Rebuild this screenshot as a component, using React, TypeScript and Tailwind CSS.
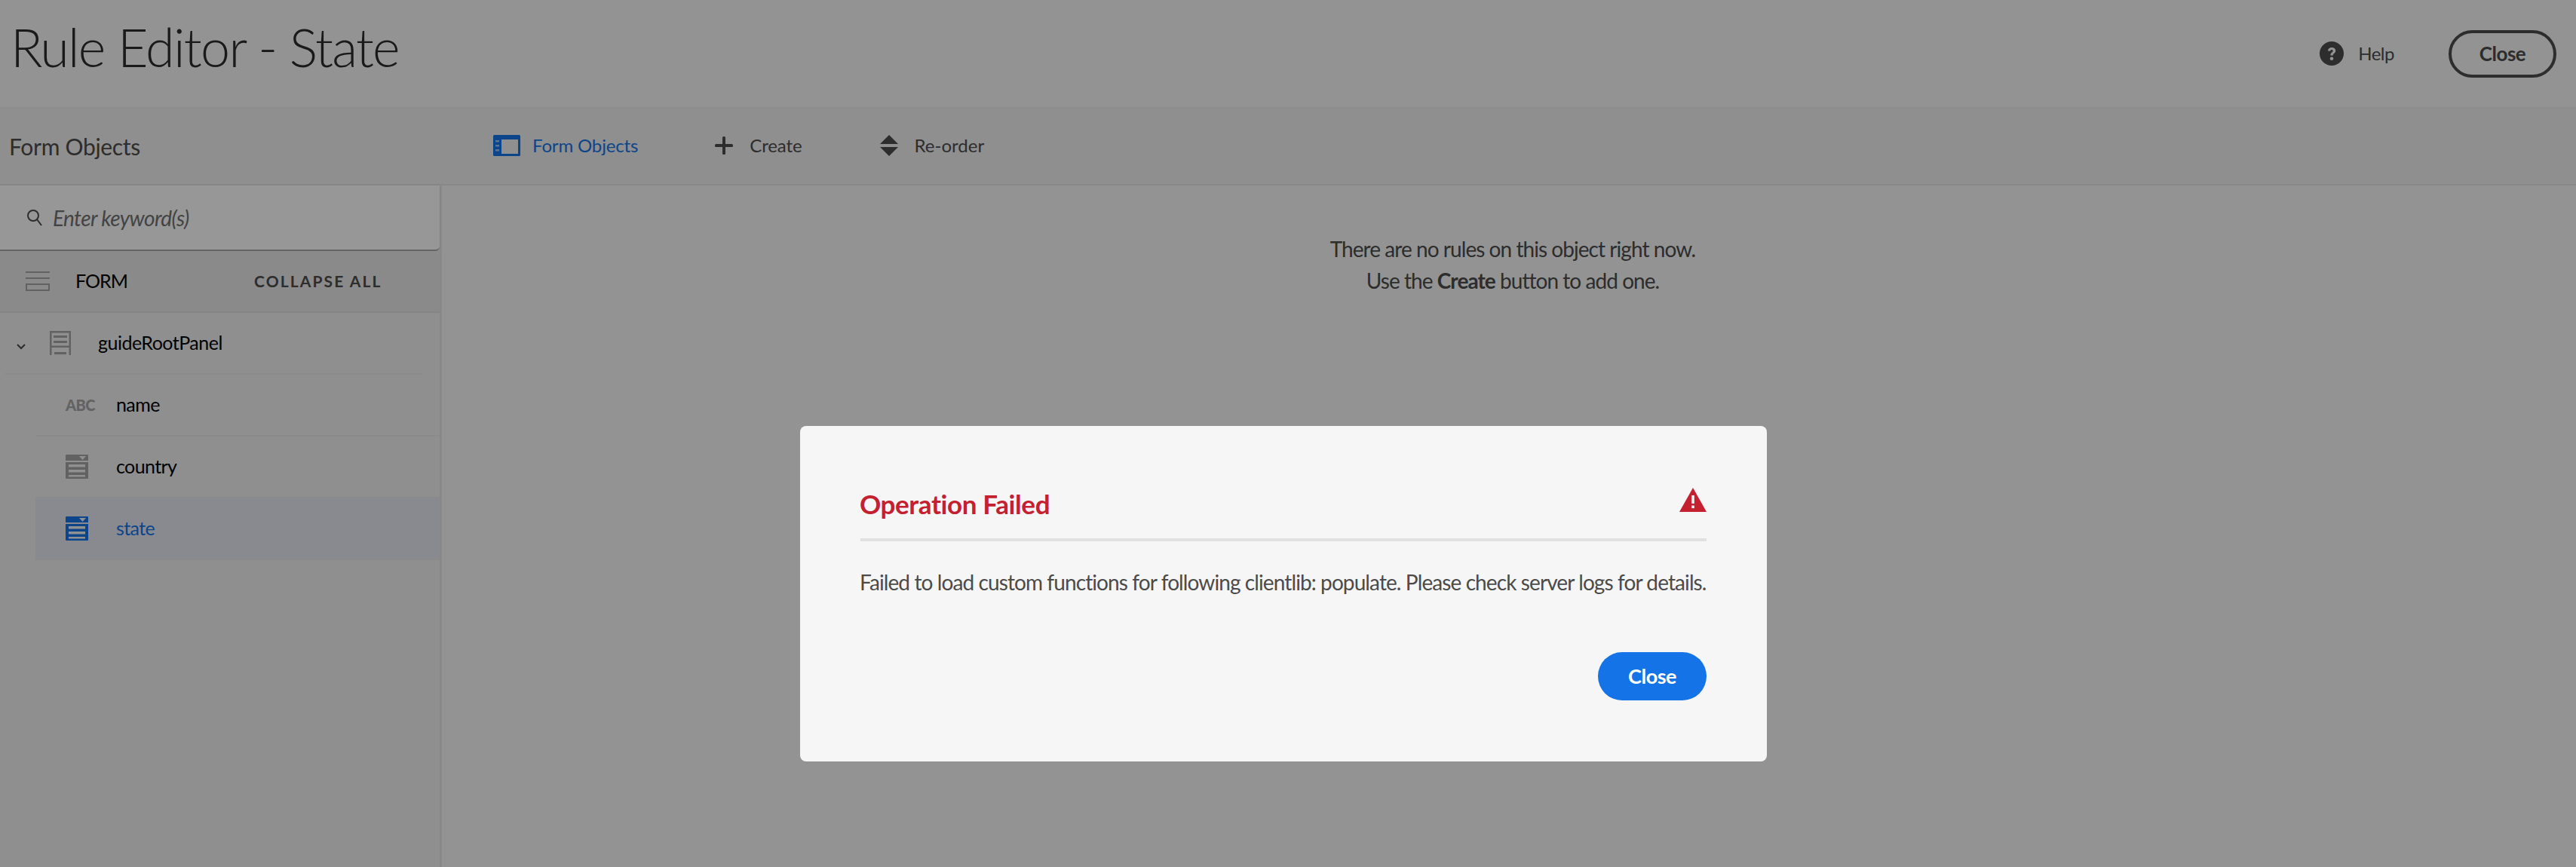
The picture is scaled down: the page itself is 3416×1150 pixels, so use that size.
function FormObjectsIcon() {
  return (
    <svg width="36" height="28" viewBox="0 0 36 28">
      <rect width="36" height="28" rx="1.5" fill="#1473e6" />
      <rect x="11" y="6" width="22" height="19" fill="#f0f0f0" />
      <rect x="3" y="7" width="5" height="2.5" fill="#9cc3f2" />
      <rect x="3" y="13" width="5" height="2.5" fill="#9cc3f2" />
      <rect x="3" y="19" width="5" height="2.5" fill="#9cc3f2" />
    </svg>
  );
}

function ReorderIcon() {
  return (
    <svg width="24" height="28" viewBox="0 0 24 28" fill="#4b4b4b">
      <path d="M12 0 L24 12 L0 12 Z" />
      <path d="M0 16 L24 16 L12 28 Z" />
    </svg>
  );
}

function DropdownIcon({ color }: { color: string }) {
  return (
    <svg width="30" height="32" viewBox="0 0 30 32" fill={color}>
      <path d="M0 1 Q0 0 1 0 H29 Q30 0 30 1 V8 H0 Z" />
      <path d="M18 2 H27 L22.5 7 Z" fill="#f0f0f0" />
      <path d="M0 10 H30 V31 Q30 32 29 32 H1 Q0 32 0 31 Z" />
      <rect x="4" y="13" width="22" height="3.5" fill="#f0f0f0" />
      <rect x="4" y="20" width="22" height="3.5" fill="#f0f0f0" />
      <rect x="4" y="27" width="22" height="2.5" fill="#f0f0f0" />
    </svg>
  );
}

function PanelIcon() {
  return (
    <svg width="28" height="32" viewBox="0 0 28 32" fill="#a4a4a4">
      <path d="M0 0 H28 V22 H0 Z M2.5 2.5 V19.5 H25.5 V2.5 Z" fillRule="evenodd" />
      <rect x="5" y="6" width="18" height="3" />
      <rect x="5" y="13" width="18" height="3" />
      <rect x="0" y="22" width="2.5" height="10" />
      <rect x="25.5" y="22" width="2.5" height="10" />
      <rect x="6" y="28" width="16" height="3" />
    </svg>
  );
}

function FormIcon() {
  return (
    <svg width="32" height="26" viewBox="0 0 32 26" fill="#a4a4a4">
      <rect y="0" width="32" height="2" />
      <rect y="8" width="32" height="2" />
      <path d="M0 16 H32 V26 H0 Z M2 18 V24 H30 V18 Z" fillRule="evenodd" />
    </svg>
  );
}

function TreeRow({
  icon,
  label,
  selected,
}: {
  icon: React.ReactNode;
  label: string;
  selected?: boolean;
}) {
  return (
    <div
      className={`ml-[47px] h-[82px] flex items-center border-b-2 border-[#e6e6e6] ${selected ? 'bg-[#e4e7ee]' : ''}`}
    >
      <div className="w-[107px] pl-[40px] flex items-center">{icon}</div>
      <span className={`text-[25px] tracking-[-0.6px] ${selected ? 'text-[#1473e6]' : 'text-black'}`}>{label}</span>
    </div>
  );
}

export default function App() {
  return (
    <div className="relative w-[3416px] h-[1150px] overflow-hidden bg-[#f5f5f5] font-['Lato','Noto_Sans',sans-serif] text-[#4b4b4b]">
      {/* Header */}
      <header className="h-[144px] flex items-center justify-between border-b-2 border-[#ebebeb] pl-[14px] pr-[26px]">
        <h1 className="mb-[18px] text-[70px] font-light tracking-[-1.7px] text-[#2c2c2c] leading-none">Rule Editor - State</h1>
        <div className="flex items-center">
          <svg width="32" height="32" viewBox="0 0 32 32" className="mr-[19px]">
            <circle cx="16" cy="16" r="16" fill="#4b4b4b" />
            <path d="M11 12.5 C11 9.5 13.2 8 16.2 8 C19.2 8 21.2 9.7 21.2 12.2 C21.2 15.6 17.8 15.6 17.8 18.5 H14.4 C14.4 14.4 17.6 14.4 17.6 12.4 C17.6 11.3 16.9 10.9 16 10.9 C15 10.9 14.3 11.5 14.2 12.8 Z" fill="#f5f5f5" />
            <circle cx="16" cy="22.8" r="2.3" fill="#f5f5f5" />
          </svg>
          <span className="text-[24px] tracking-[-0.5px] mr-[72px]">Help</span>
          <button className="w-[143px] h-[63px] rounded-full border-4 border-[#4b4b4b] text-[26px] font-bold tracking-[-0.5px]">Close</button>
        </div>
      </header>

      {/* Toolbar */}
      <div className="h-[102px] flex items-center bg-[#eeeeee] border-b-2 border-[#e1e1e1]">
        <div className="w-[654px] pl-[12px] text-[30px] tracking-[-0.3px]">Form Objects</div>
        <div className="mb-[3px] flex items-center gap-[16px] text-[#1473e6] mr-[102px]">
          <FormObjectsIcon />
          <span className="text-[24px] tracking-[-0.15px]">Form Objects</span>
        </div>
        <div className="mb-[3px] flex items-center gap-[22px] mr-[103px]">
          <svg width="24" height="24" viewBox="0 0 24 24" fill="#4b4b4b">
            <rect x="10" width="4" height="24" rx="1.5" />
            <rect y="10" width="24" height="4" rx="1.5" />
          </svg>
          <span className="text-[24px] tracking-[-0.1px]">Create</span>
        </div>
        <div className="mb-[3px] flex items-center gap-[22px]">
          <ReorderIcon />
          <span className="text-[24px] tracking-[0px]">Re-order</span>
        </div>
      </div>

      <div className="flex h-[904px]">
        {/* Sidebar */}
        <aside className="w-[586px] bg-[#eeeeee] border-r-[3px] border-[#e4e4e4]">
          <div className="h-[87px] w-[583px] bg-[#fcfcfc] rounded-br-md border-b-2 border-[#a8a8a8] shadow-sm flex items-center pl-[36px]">
            <svg width="20" height="22" viewBox="0 0 20 22" fill="none" stroke="#4b4b4b" strokeWidth="2">
              <circle cx="8" cy="8" r="7" />
              <path d="M13 13 L19 21" />
            </svg>
            <span className="ml-[14px] text-[28px] italic tracking-[-0.6px] text-[#707070]">Enter keyword(s)</span>
          </div>
          <div className="h-[82px] bg-[#e6e6e6] flex items-center pl-[34px] border-b-2 border-[#dedede]">
            <FormIcon />
            <span className="ml-[34px] w-[237px] text-[25px] tracking-[-1px] text-black">FORM</span>
            <span className="text-[21px] font-bold tracking-[2.1px] text-[#4b4b4b]">COLLAPSE ALL</span>
          </div>
          <div className="h-[82px] ml-[6px] mr-[23px] flex items-center border-b-2 border-[#e6e6e6]">
            <svg width="12" height="8" viewBox="0 0 12 8" fill="none" stroke="#4b4b4b" strokeWidth="2" className="ml-[16px] mt-[10px]">
              <path d="M1 1 L6 6 L11 1" />
            </svg>
            <div className="ml-[32px] mr-[36px]">
              <PanelIcon />
            </div>
            <span className="text-[25px] tracking-[-0.5px] text-black">guideRootPanel</span>
          </div>
          <TreeRow
            label="name"
            icon={<span className="text-[20px] font-black tracking-[-0.5px] text-[#a4a4a4]">ABC</span>}
          />
          <TreeRow label="country" icon={<DropdownIcon color="#a4a4a4" />} />
          <TreeRow label="state" selected icon={<DropdownIcon color="#1473e6" />} />
        </aside>

        {/* Rules pane */}
        <main className="flex-1 pl-[10px] pt-[63px] text-center text-[28px] leading-[42px] tracking-[-0.95px] text-[#4b4b4b]">
          <p>There are no rules on this object right now.</p>
          <p>
            Use the <b>Create</b> button to add one.
          </p>
        </main>
      </div>

      {/* Scrim and dialog */}
      <div className="absolute inset-0 bg-black/40" />
      <div className="absolute left-[1061px] top-[565px] w-[1282px] h-[445px] rounded-lg bg-[#f6f6f6] px-[80px] pt-[66px]">
        <div className="flex items-start justify-between h-[87px] border-b-4 border-[#e1e1e1]">
          <h2 className="mt-[16px] -ml-[1px] text-[35px] leading-[42px] font-bold tracking-[-0.4px] text-[#c4202f]">Operation Failed</h2>
          <svg width="36" height="32" viewBox="0 0 36 32" className="mt-[16px]">
            <path d="M18 0 L36 32 H0 Z" fill="#c4202f" />
            <rect x="16.2" y="10" width="3.6" height="11" fill="#f6f6f6" />
            <rect x="16.2" y="23.5" width="3.6" height="3.6" fill="#f6f6f6" />
          </svg>
        </div>
        <p className="mt-[36px] -ml-[1px] text-[28px] leading-[36px] tracking-[-0.9px] whitespace-nowrap text-[#4b4b4b]">
          Failed to load custom functions for following clientlib: populate. Please check server logs for details.
        </p>
        <div className="flex justify-end mt-[75px]">
          <button className="w-[144px] h-[64px] rounded-full bg-[#1473e6] text-white text-[27px] font-bold tracking-[-0.5px]">Close</button>
        </div>
      </div>
    </div>
  );
}
